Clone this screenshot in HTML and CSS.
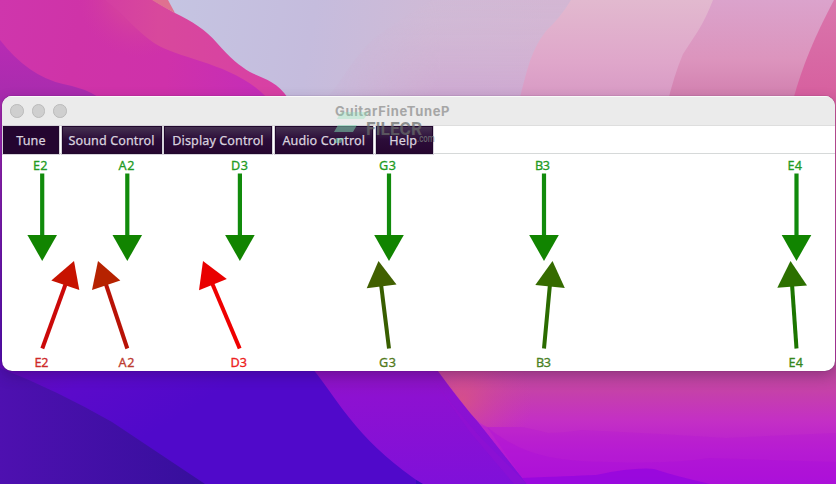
FILE: index.html
```html
<!DOCTYPE html>
<html lang="en">
<head>
<meta charset="utf-8">
<title>GuitarFineTuneP</title>
<link rel="stylesheet" href="styles.css">
</head>
<body>
<svg class="wallpaper" viewBox="0 0 836 484" aria-hidden="true">
  <defs>
    <linearGradient id="sky" x1="160" y1="0" x2="540" y2="60" gradientUnits="userSpaceOnUse"><stop offset="0" stop-color="#c5c5e2"/><stop offset=".4" stop-color="#c5bcdd"/><stop offset=".7" stop-color="#cfbad6"/><stop offset="1" stop-color="#d3b6d3"/></linearGradient>
    <linearGradient id="haze" x1="0" y1="0" x2="0" y2="1"><stop offset="0" stop-color="#d5bfd8" stop-opacity=".1"/><stop offset=".5" stop-color="#d2b0d3" stop-opacity=".5"/><stop offset="1" stop-color="#cba2d0" stop-opacity=".85"/></linearGradient>
    <linearGradient id="fade" x1="320" y1="0" x2="440" y2="0" gradientUnits="userSpaceOnUse"><stop offset="0" stop-color="#000"/><stop offset="1" stop-color="#fff"/></linearGradient>
    <mask id="hazeMask"><rect width="836" height="110" fill="url(#fade)"/></mask>
    <linearGradient id="pink1" x1="0" y1="0" x2="0" y2="1"><stop offset="0" stop-color="#e2b9cf"/><stop offset=".6" stop-color="#dfa6ca"/><stop offset="1" stop-color="#d697c3"/></linearGradient>
    <linearGradient id="pink2" x1="0" y1="0" x2="0" y2="100" gradientUnits="userSpaceOnUse"><stop offset="0" stop-color="#dba3cc"/><stop offset=".6" stop-color="#dc94bd"/><stop offset="1" stop-color="#d17eae"/></linearGradient>
    <linearGradient id="rose" x1="0" y1="0" x2="0" y2="1"><stop offset="0" stop-color="#d976ac"/><stop offset=".25" stop-color="#d7609f"/><stop offset="1" stop-color="#b637a4"/></linearGradient>
    <linearGradient id="ridge" x1="0" y1="0" x2="288" y2="0" gradientUnits="userSpaceOnUse"><stop offset=".25" stop-color="#d138a6"/><stop offset=".55" stop-color="#d8489c"/><stop offset="1" stop-color="#d83fa5"/></linearGradient>
    <linearGradient id="magenta" x1="0" y1="0" x2="267" y2="40" gradientUnits="userSpaceOnUse"><stop offset="0" stop-color="#cf36ac"/><stop offset=".3" stop-color="#cf33a8"/><stop offset=".65" stop-color="#cf31aa"/><stop offset="1" stop-color="#c52db7"/></linearGradient>
    <radialGradient id="blend" cx="140" cy="-5" r="62" gradientUnits="userSpaceOnUse"><stop offset="0" stop-color="#d6479a"/><stop offset=".45" stop-color="#d5429c" stop-opacity=".8"/><stop offset="1" stop-color="#d13aa2" stop-opacity="0"/></radialGradient>
    <linearGradient id="left" x1="0" y1="40" x2="0" y2="380" gradientUnits="userSpaceOnUse"><stop offset="0" stop-color="#b82bb4"/><stop offset=".16" stop-color="#a92cae"/><stop offset=".6" stop-color="#7419b0"/><stop offset="1" stop-color="#4d0caf"/></linearGradient>
    <linearGradient id="blue" x1="0" y1="371" x2="70" y2="484" gradientUnits="userSpaceOnUse"><stop offset="0" stop-color="#620cbb"/><stop offset=".4" stop-color="#5b0aca"/><stop offset="1" stop-color="#5009ca"/></linearGradient>
    <linearGradient id="indigo" x1="0" y1="0" x2="1" y2="0"><stop offset="0" stop-color="#4e10b0"/><stop offset="1" stop-color="#360f9c"/></linearGradient>
    <linearGradient id="violet" x1="0" y1="0" x2="0" y2="1"><stop offset="0" stop-color="#8a15b6"/><stop offset=".3" stop-color="#8d11d1"/><stop offset="1" stop-color="#8010d9"/></linearGradient>
    <linearGradient id="dusk" x1="0" y1="360" x2="0" y2="484" gradientUnits="userSpaceOnUse"><stop offset="0" stop-color="#b84b96"/><stop offset=".25" stop-color="#c541a9"/><stop offset=".48" stop-color="#c430c4"/><stop offset=".7" stop-color="#ba20d0"/><stop offset="1" stop-color="#ad12da"/></linearGradient>
    <radialGradient id="glow" gradientUnits="userSpaceOnUse" cx="462" cy="400" r="70"><stop offset="0" stop-color="#dc567c" stop-opacity=".7"/><stop offset="1" stop-color="#cc44a0" stop-opacity="0"/></radialGradient>
  </defs>
  <rect width="836" height="484" fill="url(#sky)"/>
  <path d="M432 0L836 0V105H320C342 85 353 54 380 34Q410 13 432 0Z" fill="url(#haze)" mask="url(#hazeMask)"/>
  <path d="M571 0Q560 18 546 31C529 53 526 76 518 105H836V0Z" fill="url(#pink1)"/>
  <path d="M713 0Q706 18 698 31L683 54Q674 75 667 105H836V0Z" fill="url(#pink2)"/>
  <path d="M834 0C815 36 803 64 793 100V380H836V0Z" fill="url(#rose)"/>
  <path d="M0 0H153Q166 8 175 13C193 22 205 29 217 43C230 58 240 66 250 72C264 79 277 81 288 98H0Z" fill="url(#ridge)"/>
  <path d="M152 0Q163 7 175 13L168 0Z" fill="#df7190"/>
  <path d="M0 0H105C124 15 136 31 154 43C180 60 235 63 267 98H0Z" fill="url(#magenta)"/>
  <path d="M0 0H105C124 15 136 31 154 43C180 60 235 63 267 98H0Z" fill="url(#blend)"/>
  <path d="M0 40Q28 76 63 84Q85 88 100 98H40V380H0Z" fill="url(#left)"/>
  <rect y="360" width="836" height="124" fill="url(#blue)"/>
  <path d="M0 368Q56 390 112 422L205 484H0Z" fill="url(#indigo)"/>
  <path d="M305 360C322 378 337 404 356 426Q381 456 422 484H550L440 360Z" fill="url(#violet)"/>
  <path d="M426 370L451 403L481 438L526 483L514 484L470 432Z" fill="#9d12d1" opacity=".3"/>
  <path d="M432 360L438 371Q458 399 478 422L527 484H836V360Z" fill="url(#dusk)"/>
  <path d="M438 371L471 414Q480 424 487 427H550V371Z" fill="url(#glow)"/>
  <path d="M487 427H522Q537 430 548 433Q562 433 582 430L660 434L726 438L836 433V484H527L480 424Z" fill="#b013d8" opacity=".22"/>
  <path d="M487 427Q515 450 549 457Q575 462 610 462Q670 464 710 458L836 462V484H527Z" fill="#aa0ddc" opacity=".3"/>
  <path d="M522 478Q570 476 596 475Q635 467 654 469Q675 476 710 484H527Z" fill="#9306df" opacity=".75"/>
  <path d="M416 480L423 484H416Z" fill="#390bbd"/>
</svg>
<main class="window">
  <header class="titlebar">
    <div class="lights"><i></i><i></i><i></i></div>
    <h1 class="title">GuitarFineTuneP</h1>
  </header>
  <nav class="menubar">
    <span class="item tune">Tune</span>
    <span class="item sound">Sound Control</span>
    <span class="item display">Display Control</span>
    <span class="item audio">Audio Control</span>
    <span class="item help">Help</span>
  </nav>
  <svg class="tuner" viewBox="2 155 833 216">
    <defs>
      <g id="target"><path d="M0 173.500V236" stroke="#118b0c" stroke-width="4.200"/><path d="M-14.800 235H14.800L0 261Z" fill="#118400"/></g>
    </defs>
    <use href="#target" x="42.200"/><use href="#target" x="127.300"/><use href="#target" x="239.900"/>
    <use href="#target" x="389"/><use href="#target" x="544"/><use href="#target" x="796.500"/>
    <g class="note want">
      <text x="33" y="170" textLength="14.500">E2</text><text x="118.500" y="170" textLength="16">A2</text><text x="231" y="170" textLength="17">D3</text>
      <text x="379" y="170" textLength="17">G3</text><text x="535" y="170" textLength="15">B3</text><text x="787.500" y="170" textLength="14.500">E4</text>
    </g>
    <g stroke-width="4">
      <path d="M42.300 348.500L66 283" stroke="#cb0909"/><path d="M127.300 348.500L105.500 283" stroke="#b81206"/><path d="M239.700 348.500L212 283" stroke="#ef0000"/>
      <path d="M389 348.500L381 284" stroke="#385e00"/><path d="M544 348.500L550 284" stroke="#2b6b00"/><path d="M796.500 348.500L792 284" stroke="#1c7500"/>
    </g>
    <path d="M74 261L79.300 290L51.300 280.500Z" fill="#c71200"/>
    <path d="M98 261L120.300 280.500L92 290Z" fill="#b62200"/>
    <path d="M203 261L226.800 279L199 290.300Z" fill="#e90000"/>
    <path d="M378.500 261L396.500 284.500L366.700 288.200Z" fill="#416000"/>
    <path d="M552.500 261L564.800 288L535.300 285Z" fill="#356b00"/>
    <path d="M790.500 261L807 285.500L777.300 287.700Z" fill="#2c7000"/>
    <g class="note">
      <text x="34.500" y="367" textLength="14" fill="#ce2929" stroke="#ce2929">E2</text><text x="118.500" y="367" textLength="16" fill="#bd3c30" stroke="#bd3c30">A2</text><text x="230.500" y="367" textLength="16.500" fill="#ed2020" stroke="#ed2020">D3</text>
      <text x="379" y="367" textLength="17" fill="#537a20" stroke="#537a20">G3</text><text x="536" y="367" textLength="15" fill="#4a8125" stroke="#4a8125">B3</text><text x="788.500" y="367" textLength="14.500" fill="#358719" stroke="#358719">E4</text>
    </g>
  </svg>
</main>
<svg class="watermark" viewBox="334 110 112 40">
  <g fill="#7fe0b4"><path d="M341 112H369L364 119H337Z" opacity=".3"/><path d="M338 125H357L353 132H334Z" opacity=".5"/><path d="M336 138H344L341 143H333Z" opacity=".5"/></g>
  <text class="brand" x="366" y="135" textLength="56" lengthAdjust="spacingAndGlyphs">FILECR</text>
  <text class="suffix" x="417" y="141.500" textLength="17.500" lengthAdjust="spacingAndGlyphs">.com</text>
</svg>
</body>
</html>
```
FILE: styles.css
```css
* { box-sizing: border-box; }
body {
  margin: 0;
  width: 836px;
  height: 484px;
  overflow: hidden;
  padding: 96px 1.5px 0 2px;
  font-family: "Noto Sans", sans-serif;
}
.wallpaper {
  position: absolute;
  inset: 0;
  width: 836px;
  height: 484px;
  z-index: -1;
}
.window {
  height: 275.4px;
  border-radius: 10px;
  overflow: hidden;
  background: #fff;
  box-shadow: 0 0 1px rgba(40, 0, 50, .65), 0 5px 14px rgba(40, 0, 60, .28);
}
.titlebar {
  height: 30px;
  display: grid;
  grid-template-columns: 333px 1fr;
  align-items: center;
  background: #ebebeb;
  border-top: 1.5px solid #fafafa;
  border-bottom: 1px solid #dedede;
}
.lights { display: flex; gap: 8px; padding-left: 8px; }
.lights i {
  width: 13.6px;
  height: 13.6px;
  border-radius: 50%;
  background: #cfcfcf;
  border: 1px solid #bababa;
}
.title {
  margin: 0;
  font: 700 13px/26px Inter, sans-serif;
  letter-spacing: .66px;
  color: #a6a6a6;
}
.menubar {
  height: 29px;
  display: flex;
  gap: 2.5px;
  padding-left: 1px;
  background: linear-gradient(#fff 27px, #d6d9d9 27px, #d6d9d9 28px, #fff 28px);
}
.item {
  height: 28px;
  display: flex;
  align-items: center;
  justify-content: center;
  padding: 1px 0 0 0;
  color: #d9d2df;
  font-size: 12.6px;
  letter-spacing: .1px;
  -webkit-text-stroke: .25px #d9d2df;
  white-space: nowrap;
  background: linear-gradient(#443050, #2c0d39 48%, #260630);
  border: 1px solid #21072d;
  box-shadow: 0 0 0 1px #d6d3da;
}
.tune { width: 56px; background: #240530; }
.sound { width: 100px; }
.display { width: 108px; }
.audio { width: 98.500px; }
.help { width: 57.500px; padding-right: 2px; }
.tuner { display: block; width: 833px; height: 216px; }
.note { font-size: 12.6px; stroke-width: .3px; }
.want { fill: #239b23; stroke: #239b23; }
.watermark {
  position: absolute;
  left: 334px;
  top: 110px;
  width: 112px;
  height: 40px;
}
.brand { font: 700 18px Roboto, sans-serif; fill: #686b6a; fill-opacity: .72; }
.suffix { font: 500 10px Roboto, sans-serif; fill: #707374; fill-opacity: .85; }
```
